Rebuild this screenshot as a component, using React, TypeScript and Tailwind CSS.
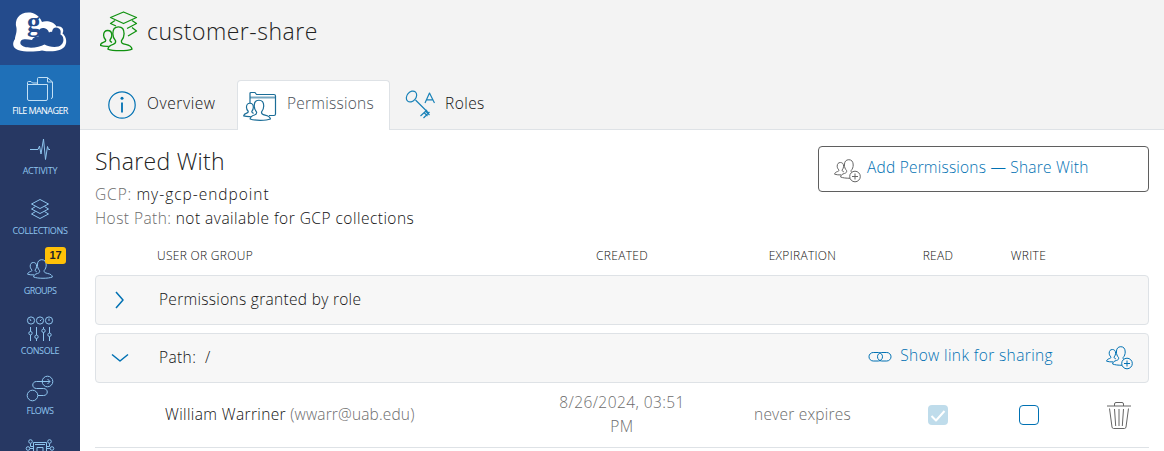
import React from "react";

const BIG =
  "M12.6 11.6C11.2 10 10.4 8.2 10.4 6C10.4 2.6 12 .7 14.8 .7S19.2 2.6 19.2 6C19.2 8.2 18.5 10 17.1 11.6C17 13.4 17.8 13.8 20.4 14.4C23.6 15.1 25.1 16 25.4 18C21.5 19.7 10.5 19.7 6.6 18C6.9 16 8 15.2 10.6 14.4C12.4 13.8 12.8 13.2 12.6 11.6Z";
const SMALL =
  "M7.2 15.9C5 16 2.4 15.8 .6 15.2C.8 13.7 1.8 13.1 3.4 12.6C4.8 12.2 5 11.8 4.8 10.9C3.8 9.8 3.2 8.6 3.2 7.2C3.2 4.8 4.4 3.5 6.4 3.5S9.6 4.8 9.6 7.2C9.6 8.6 9.1 9.8 8.2 10.9C8 11.9 8.4 12.4 9.8 12.8";

function Svg({ w, h, className = "", children }: { w: number; h: number; className?: string; children: React.ReactNode }) {
  return (
    <svg width={w} height={h} viewBox={`0 0 ${w} ${h}`} fill="none" stroke="currentColor" strokeWidth="1" strokeLinejoin="round" className={`shrink-0 ${className}`}>
      {children}
    </svg>
  );
}

const Files = () => (
  <Svg w={28} h={26} className="text-[#c3e0f5]">
    <path d="M1.5 8.5V6.5Q1.5 5.5 2.5 5.5H5L6.5 7H11.5V2.5Q11.5 1.5 12.5 1.5H21.5L26.5 6V21Q26.5 22.5 25 22.5M11.5 8.5V7M1.5 8.5H21.5V23Q21.5 24.5 20 24.5H3Q1.5 24.5 1.5 23ZM21.5 1.5V6H26.5" />
  </Svg>
);
const Activity = () => (
  <Svg w={22} h={24}>
    <path d="M1 12.5H9L10.5 9L12 17L14.5 2L16.5 22.5L18.5 9.5L19.5 12.5H21" />
  </Svg>
);
const Layers = () => (
  <Svg w={20} h={22}>
    <path d="M10 1.5L18.5 6L10 10.500L1.500 6ZM5.500 8.500L1.500 11L10 15.500L18.500 11L14.500 8.500M5.500 13.500L1.500 16L10 20.500L18.500 16L14.500 13.500" />
  </Svg>
);
const Groups = () => (
  <Svg w={26} h={20}>
    <path d={BIG} />
    <path d={SMALL} />
  </Svg>
);
const Console = () => (
  <Svg w={28} h={26}>
    <circle cx="5" cy="4.500" r="3.600" />
    <circle cx="14" cy="4.500" r="3.600" />
    <circle cx="23" cy="4.500" r="3.600" />
    <path d="M5 5L3.800 2.800M14 5L15.500 3.500M23 5V2.500M4.500 11V15.500M4.500 19V25M10.500 11V19M10.500 22.500V25M17.500 11V13M17.500 16.500V25M23.500 11V17M23.500 20.500V25" />
    <circle cx="4.500" cy="17.200" r="1.700" />
    <circle cx="10.500" cy="20.800" r="1.700" />
    <circle cx="17.500" cy="14.800" r="1.700" />
    <circle cx="23.500" cy="18.800" r="1.700" />
  </Svg>
);
const Flows = () => (
  <Svg w={28} h={28}>
    <circle cx="6.500" cy="20.500" r="5.300" />
    <circle cx="21.500" cy="6.500" r="5.300" />
    <path d="M12 20.500H17.500C22.500 20.500 22.500 13.500 17.500 13.500H10.500C5.500 13.500 5.500 6.500 10.500 6.500H24M21.500 4L24 6.500L21.500 9" />
  </Svg>
);
const Compute = () => (
  <Svg w={30} h={26}>
    <circle cx="5.500" cy="5.500" r="1.800" />
    <circle cx="24.500" cy="5.500" r="1.800" />
    <circle cx="3" cy="12.500" r="1.800" />
    <circle cx="27" cy="12.500" r="1.800" />
    <path d="M8.500 15V6.500H21.500V15M10 8.500H20M5.500 7.500V10.500H8.500M24.500 7.500V10.500H21.500M5 12.500H8.500M25 12.500H21.500M12 15V11.500H18V15" />
  </Svg>
);

const nav = [
  { label: "FILE MANAGER", icon: <Files />, active: true, track: "tracking-[-0.58px]" },
  { label: "ACTIVITY", icon: <Activity />, track: "tracking-[-0.25px]" },
  { label: "COLLECTIONS", icon: <Layers />, track: "tracking-[-0.35px]" },
  { label: "GROUPS", icon: <Groups />, badge: "17", track: "tracking-[-0.55px]" },
  { label: "CONSOLE", icon: <Console />, track: "tracking-[-0.4px]" },
  { label: "FLOWS", icon: <Flows />, track: "tracking-[-0.55px]" },
  { label: "", icon: <Compute />, track: "" },
];

function Logo() {
  return (
    <svg width="56" height="42" viewBox="0 0 56 42" className="shrink-0 overflow-visible">
      <path fill="#fff" d="M3 27C0 31 .5 36 6 38C14 40.500 24 39.500 30 38.500C40 40.500 50 39 53 34C56 29 53 23 50.500 21.500C53 17 49 13.500 44.500 14.500C42 9.500 34 8 30 10C27 3 22 .5 16.500 .5C7 .5 2 8 4.500 16C5 21 3 24 3 27Z" />
      <path fill="#244b8c" d="M8.500 32C7.500 26.500 13 26.500 20 28C21 25.500 24 24 26.500 24.500C25.500 19 28 15.500 31.500 16C35.500 16.500 36.500 19 37 20.500C38 19.500 39.500 19.500 40 20C40.500 15.500 44 14.500 47 16.500C49.500 18.500 48.500 21 48.500 22.500C52 24 52.500 30 49.500 32.500C46 36.500 37 35 32.500 32.500C26 36.500 11 37 8.500 32Z" />
      <text x="15" y="19" fontSize="27" fontWeight="700" letterSpacing="0" fontFamily="Liberation Serif, serif" fill="#244b8c">g</text>
    </svg>
  );
}

function AddPeople({ fill }: { fill: string }) {
  return (
    <Svg w={28} h={24}>
      <path d={BIG} />
      <path d={SMALL} />
      <circle cx="21" cy="17.500" r="5.300" fill={fill} />
      <path d="M21 14.500V20.500M18 17.500H24" />
    </Svg>
  );
}

const cols = "grid grid-cols-[437px_180px_181px_90px_91px_75px] items-center";

export default function App() {
  return (
    <div className="flex h-[451px] w-[1164px] overflow-hidden bg-white font-['Open_Sans','Noto_Sans',sans-serif] text-[15.5px] font-light tracking-[0.22px] text-[#111]">
      <nav className="flex h-full w-20 shrink-0 flex-col overflow-hidden bg-[#273863]">
        <div className="flex h-[65px] shrink-0 items-start justify-center bg-[#244b8c] pt-3">
          <Logo />
        </div>
        {nav.map((n, i) => (
          <div key={i} className={`relative flex h-[60px] shrink-0 flex-col items-center ${n.active ? "bg-[#1f70b8] text-white" : "text-[#8ec5ee]"}`}>
            <div className="flex h-[40px] items-center justify-center pt-2">{n.icon}</div>
            {n.label && <div className={`text-[9px] leading-[12px] font-normal whitespace-nowrap ${n.track}`}>{n.label}</div>}
            {n.badge && (
              <span className="absolute top-[2px] left-[45px] flex h-[17px] w-[21px] items-center justify-center rounded-[3px] bg-[#ffc107] font-['Liberation_Sans',sans-serif] text-[11px] font-bold tracking-normal text-[#212529]">{n.badge}</span>
            )}
          </div>
        ))}
      </nav>

      <main className="flex min-w-0 flex-1 flex-col">
        <header className="flex h-[130px] shrink-0 flex-col justify-between bg-[#f3f3f3]">
          <div className="flex h-[62px] items-center gap-[9px] pl-5 text-[23px]">
            <Svg w={38} h={42} className="text-[#119211]">
              <g strokeWidth="1.300">
                <path d="M23.500 2L36.500 7.500L23.500 13.500L10.500 7.500ZM15 10.500L10.500 13.500L16 16M32 10.500L36.500 13.500L27 18.500M32 17.500L36.500 21L28 26" />
                <path transform="translate(-0.500 16) scale(1.280)" strokeWidth="1.050" fill="#f3f3f3" d={BIG} />
                <path transform="translate(-0.500 16) scale(1.280)" strokeWidth="1.050" d={SMALL} />
              </g>
            </Svg>
            <h1 className="tracking-[0.5px] text-[#222]">customer-share</h1>
          </div>
          <div className="flex h-[50px]">
            <div className="w-[13px] border-b border-[#dee2e6]" />
            <div className="flex w-[144px] items-center gap-[11px] border-b border-[#dee2e6] pl-[15px]">
              <Svg w={28} h={28} className="text-[#0071b3]">
                <circle cx="14" cy="14" r="13.200" strokeWidth="1.200" />
                <path d="M14 11.500V21.500" strokeWidth="1.800" />
                <circle cx="14" cy="7.300" r="1.500" fill="currentColor" stroke="none" />
              </Svg>
              <span className="pb-[2px] tracking-[0.6px]">Overview</span>
            </div>
            <div className="flex w-[153px] items-center gap-[10px] rounded-t border border-b-0 border-[#dee2e6] bg-white pl-[5px] text-[#495057]">
              <Svg w={34} h={32} className="text-[#1b6d97]">
                <path d="M7 13V3.500Q7 2.500 8 2.500H12L13.500 4.500H31Q32.500 4.500 32.500 6V24Q32.500 25.500 31 25.500H26" strokeWidth="1.200" />
                <path d="M7 7.500H32.500" strokeWidth="2" strokeOpacity=".6" />
                <path transform="translate(0 9.500) scale(1.080)" strokeWidth="1.100" fill="#fff" d={BIG} />
                <path transform="translate(0 9.500) scale(1.080)" strokeWidth="1.100" d={SMALL} />
              </Svg>
              <span className="pb-[4px] tracking-[0.25px]">Permissions</span>
            </div>
            <div className="flex flex-1 items-center gap-[10px] border-b border-[#dee2e6] pl-[15px]">
              <Svg w={30} h={30} className="text-[#1982b8]">
                <ellipse cx="6.500" cy="6.500" rx="4.500" ry="6" transform="rotate(40 6.500 6.500)" strokeWidth="1.200" />
                <path d="M10.500 10L24 23.500M22 20L15.500 26M24.500 22L18.500 28M19 22.500L22.500 26M20.500 21L24.500 25M20 13L24.500 3L29.500 13M21.500 9.800H28" strokeWidth="1.200" />
              </Svg>
              <span className="pb-[2px] tracking-[0.45px]">Roles</span>
            </div>
          </div>
        </header>

        <section className="flex flex-col px-[15px] pt-4">
          <div className="flex h-[84px] items-start justify-between">
            <div>
              <h2 className="mb-[6px] text-[23px] leading-[30px] tracking-[0.3px] text-[#222]">Shared With</h2>
              <p className="leading-6"><span className="tracking-[0.9px] text-[#6c6c6c]">GCP:</span> <span className="tracking-[0.98px]">my-gcp-endpoint</span></p>
              <p className="leading-6"><span className="tracking-[0.45px] text-[#6c6c6c]">Host Path:</span> <span className="tracking-[0.48px]">not available for GCP collections</span></p>
            </div>
            <button className="flex h-[46px] w-[331px] items-center gap-[5px] rounded border border-[#5f5f5f] pb-1 pl-[15px] text-[#0071b3]">
              <span className="pt-2 text-[#666]"><AddPeople fill="#fff" /></span>
              <span className="pt-[2px] tracking-[0.21px]">Add Permissions — Share With</span>
            </button>
          </div>

          <div className={`${cols} mt-[14px] h-[24px] text-center text-[12px] tracking-[0.3px]`}>
            <span className="pl-[62px] text-left">USER OR GROUP</span>
            <span>CREATED</span>
            <span>EXPIRATION</span>
            <span>READ</span>
            <span>WRITE</span>
          </div>

          <div className="mt-[7px] flex h-[50px] items-center rounded border border-[#dee2e6] bg-[#f7f7f7]">
            <Svg w={24} h={24} className="ml-3 text-[#0071b3]"><path d="M8 4L15 12L8 20" strokeWidth="1.500" /></Svg>
            <span className="ml-[27px] tracking-[0.3px]">Permissions granted by role</span>
          </div>

          <div className="mt-2 flex h-[50px] items-center rounded border border-[#dee2e6] bg-[#f7f7f7]">
            <Svg w={24} h={24} className="ml-3 text-[#0071b3]"><path d="M4 8.500L12 15L20 8.500" strokeWidth="1.500" /></Svg>
            <span className="ml-[27px] tracking-[0.38px]">Path:&nbsp; /</span>
            <div className="ml-auto flex items-center pr-[14px] text-[#0071b3]">
              <Svg w={24} h={12} className="mb-[2px]">
                <rect x="1" y="1.500" width="13.500" height="8.500" rx="4.250" />
                <rect x="9.500" y="1.500" width="13.500" height="8.500" rx="4.250" />
              </Svg>
              <span className="mr-[53px] ml-2 pb-[4px] tracking-[0.38px]">Show link for sharing</span>
              <AddPeople fill="#f7f7f7" />
            </div>
          </div>

          <div className={`${cols} h-[65px] border-b border-[#dee2e6] pb-px text-center text-[#6c6c6c]`}>
            <span className="pl-[70px] text-left"><span className="tracking-[0.37px] text-[#111]">William Warriner</span> <span className="tracking-[0.15px]">(wwarr@uab.edu)</span></span>
            <span className="px-6 pb-px leading-6 tracking-[0.42px]">8/26/2024, 03:51 PM</span>
            <span>never expires</span>
            <span className="flex justify-center">
              <span className="flex size-5 items-center justify-center rounded bg-[#bfdceb] text-white">
                <Svg w={20} h={20}><path d="M3.500 11L8 15.500L16.500 6" strokeWidth="2" /></Svg>
              </span>
            </span>
            <span className="flex justify-center"><span className="size-5 rounded border border-[#0071b3] bg-white" /></span>
            <span className="flex pl-[33px]">
              <Svg w={24} h={28} className="text-[#666]">
                <path d="M0 5H24M7.500 5V3Q7.500 1.500 9 1.500H15Q16.500 1.500 16.500 3V5M2.500 7.500L5 26Q5.300 27.500 6.500 27.500H17.500Q18.700 27.500 19 26L21.500 7.500M7.500 8L8.700 25M12 8V25M16.500 8L15.300 25" />
              </Svg>
            </span>
          </div>
        </section>
      </main>
    </div>
  );
}
